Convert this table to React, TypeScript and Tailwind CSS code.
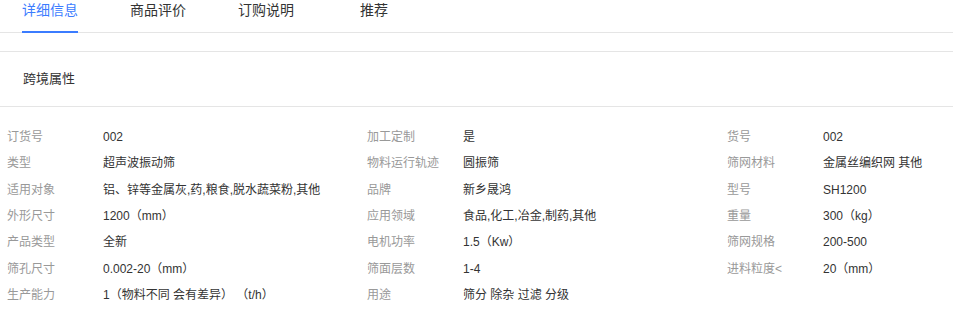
const tabs = ['详细信息', '商品评价', '订购说明', '推荐'];

const attrs: [string, string][] = [
  ['订货号', '002'],
  ['加工定制', '是'],
  ['货号', '002'],
  ['类型', '超声波振动筛'],
  ['物料运行轨迹', '圆振筛'],
  ['筛网材料', '金属丝编织网 其他'],
  ['适用对象', '铝、锌等金属灰,药,粮食,脱水蔬菜粉,其他'],
  ['品牌', '新乡晟鸿'],
  ['型号', 'SH1200'],
  ['外形尺寸', '1200（mm）'],
  ['应用领域', '食品,化工,冶金,制药,其他'],
  ['重量', '300（kg）'],
  ['产品类型', '全新'],
  ['电机功率', '1.5（Kw）'],
  ['筛网规格', '200-500'],
  ['筛孔尺寸', '0.002-20（mm）'],
  ['筛面层数', '1-4'],
  ['进料粒度<', '20（mm）'],
  ['生产能力', '1（物料不同 会有差异） （t/h）'],
  ['用途', '筛分 除杂 过滤 分级'],
];

export default function App() {
  return (
    <div className="w-[953px] h-[311px] bg-white overflow-hidden font-['Liberation_Sans','Noto_Sans_CJK_SC',sans-serif]">
      {/* Tabs */}
      <div className="flex gap-2 h-[33px] border-b border-[#e5e5e5]">
        {tabs.map((t, i) => (
          <div key={t} className="w-[100px] flex justify-center">
            <span
              className={
                i === 0
                  ? 'h-[33px] pt-[1px] text-[14px] leading-[18px] text-[#3b7cff] border-b-2 border-[#3b7cff]'
                  : 'h-[33px] pt-[1px] text-[14px] leading-[18px] text-[#333]'
              }
            >
              {t}
            </span>
          </div>
        ))}
      </div>

      <div className="h-[18px]" />

      {/* Section title */}
      <div className="border-t border-b border-[#e5e5e5] h-[56px] flex items-center pl-[23px]">
        <span className="text-[13px] text-[#333] leading-[18px]">跨境属性</span>
      </div>

      {/* Attributes */}
      <div className="grid grid-cols-[360px_360px_233px] pt-[17px] pl-[7px]">
        {attrs.map(([k, v]) => (
          <div key={k} className="flex h-[26.33px] items-center text-[12px]">
            <span className="w-[96px] shrink-0 text-[#999]">{k}</span>
            <span className="text-[#333] whitespace-pre">{v}</span>
          </div>
        ))}
      </div>
    </div>
  );
}
